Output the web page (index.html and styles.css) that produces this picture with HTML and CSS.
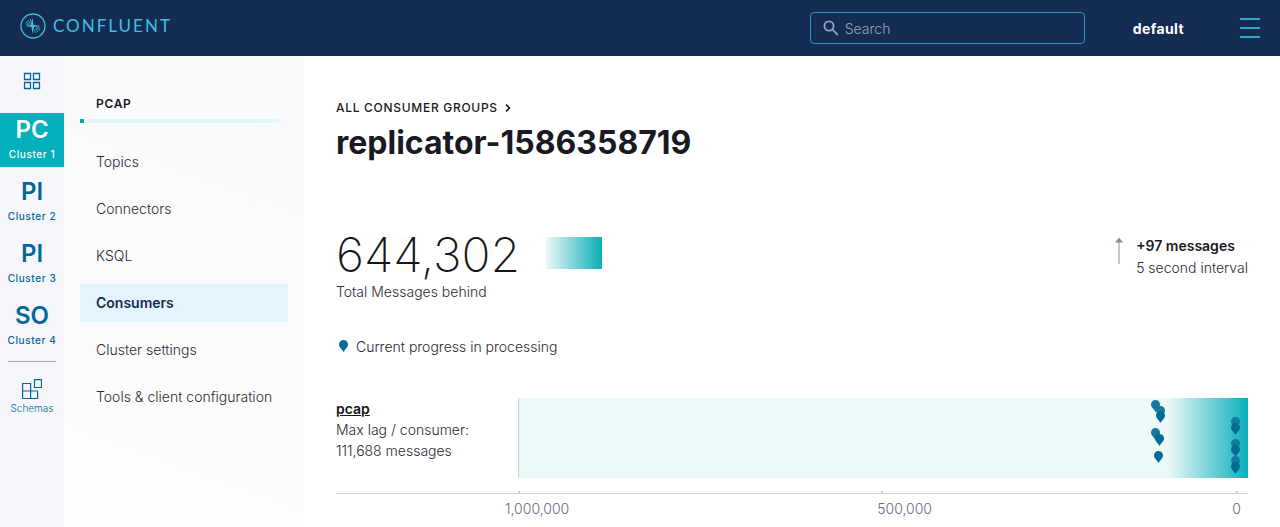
FILE: index.html
```html
<!DOCTYPE html>
<html lang="en">
<head>
<meta charset="utf-8">
<meta name="viewport" content="width=device-width, initial-scale=1">
<title>replicator-1586358719 – Consumer groups</title>
<link rel="stylesheet" href="styles.css">
</head>
<body>
<svg class="defs" width="0" height="0" aria-hidden="true">
  <symbol id="pin" viewBox="0 0 9 12"><path d="M4.500 0a4.500 4.500 0 0 1 4.500 4.500C9 7.200 6.500 8.600 4.500 12 2.500 8.600 0 7.200 0 4.500A4.500 4.500 0 0 1 4.500 0z"/></symbol>
</svg>
<header class="topbar">
  <a class="brand" href="#" aria-label="Confluent">
    <svg class="brand-mark" viewBox="0 0 26 26" fill="none" stroke="currentColor">
      <circle cx="13" cy="13" r="12" stroke-width="1.300"/>
      <path d="M12.500 5l1 7 7.500 1-7 1-1.500 7-1-7-7-1 6-.8z" fill="currentColor" stroke="none"/>
      <path d="M11.300 9.500L10.300 6M10.300 10.300L7.800 7M9.600 11L6 8.800M9.300 12L5.500 10.700M14.500 16.500l1 3.500M15.500 15.700l2.500 3.300M16.200 15l3.600 2.200M16.500 14l3.800 1.300" stroke-width=".8"/>
    </svg>
    <span class="brand-name">CONFLUENT</span>
  </a>
  <label class="search">
    <svg class="search-icon" viewBox="0 0 16 16" fill="none" stroke="currentColor" stroke-width="1.800"><circle cx="6" cy="6" r="4.600"/><path d="M9.300 9.300l5.500 5.500"/></svg>
    <input class="search-input" type="search" placeholder="Search" aria-label="Search">
  </label>
  <button class="tenant" type="button">default</button>
  <button class="menu" type="button" aria-label="Menu">
    <span class="menu-bar"></span><span class="menu-bar"></span><span class="menu-bar"></span>
  </button>
</header>
<div class="shell">
  <nav class="rail" aria-label="Clusters">
    <a class="rail-home" href="#" aria-label="Home">
      <svg class="home-icon" viewBox="0 0 18 18" fill="none" stroke="currentColor" stroke-width="1.300"><path d="M1.500 1.500h6v6h-6zM10.500 1.500h6v6h-6zM1.500 10.500h6v6h-6zM10.500 10.500h6v6h-6z"/></svg>
    </a>
    <a class="cluster cluster-active" href="#"><span class="cluster-code">PC</span><span class="cluster-name">Cluster 1</span></a>
    <a class="cluster" href="#"><span class="cluster-code">PI</span><span class="cluster-name">Cluster 2</span></a>
    <a class="cluster" href="#"><span class="cluster-code">PI</span><span class="cluster-name">Cluster 3</span></a>
    <a class="cluster" href="#"><span class="cluster-code">SO</span><span class="cluster-name">Cluster 4</span></a>
    <a class="schemas" href="#">
      <svg class="schemas-icon" viewBox="0 0 20 20" fill="none" stroke="currentColor" stroke-width="1.200"><path d="M.600 4.500h8v15h-8zM.600 12h15v7.500h-15M12.500.600h7v7.900h-7z"/></svg>
      <span>Schemas</span>
    </a>
  </nav>
  <nav class="sidebar" aria-label="Cluster sections">
    <h2 class="sidebar-title">PCAP</h2>
    <div class="rule"><span class="rule-dot"></span><span class="rule-line"></span></div>
    <a class="nav-link" href="#">Topics</a>
    <a class="nav-link" href="#">Connectors</a>
    <a class="nav-link" href="#">KSQL</a>
    <a class="nav-link nav-active" href="#" aria-current="page">Consumers</a>
    <a class="nav-link" href="#">Cluster settings</a>
    <a class="nav-link" href="#">Tools &amp; client configuration</a>
  </nav>
  <main class="main">
    <a class="crumb" href="#">ALL CONSUMER GROUPS
      <svg class="crumb-icon" viewBox="0 0 6 8" fill="none" stroke="currentColor" stroke-width="1.600"><path d="M1 .700L4.500 4 1 7.300"/></svg>
    </a>
    <h1 class="title">replicator-1586358719</h1>
    <section class="summary">
      <div>
        <div class="total-row"><span class="total">644,302</span><span class="swatch"></span></div>
        <div class="total-label">Total Messages behind</div>
      </div>
      <div class="trend">
        <svg class="trend-icon" viewBox="0 0 8 28"><path d="M4 2v25" stroke="currentColor" fill="none"/><path d="M4 .500L8 5.500H0z" fill="currentColor"/></svg>
        <div><div class="trend-value">+97 messages</div><div>5 second interval</div></div>
      </div>
    </section>
    <div class="legend"><svg class="legend-pin"><use href="#pin"/></svg>Current progress in processing</div>
    <section class="lag">
      <div class="lag-text">
        <a class="topic" href="#">pcap</a>
        <div>Max lag / consumer:</div>
        <div>111,688 messages</div>
      </div>
      <div class="chart">
        <svg class="pin pin-back" style="left:87.400%;top:3%"><use href="#pin"/></svg>
        <svg class="pin pin-back" style="left:88%;top:10%"><use href="#pin"/></svg>
        <svg class="pin" style="left:88%;top:16%"><use href="#pin"/></svg>
        <svg class="pin pin-back" style="left:87.400%;top:38%"><use href="#pin"/></svg>
        <svg class="pin" style="left:87.900%;top:45%"><use href="#pin"/></svg>
        <svg class="pin" style="left:87.800%;top:66%"><use href="#pin"/></svg>
        <svg class="pin pin-back" style="left:98.300%;top:24%"><use href="#pin"/></svg>
        <svg class="pin" style="left:98.300%;top:31%"><use href="#pin"/></svg>
        <svg class="pin pin-back" style="left:98.300%;top:51%"><use href="#pin"/></svg>
        <svg class="pin" style="left:98.300%;top:59%"><use href="#pin"/></svg>
        <svg class="pin pin-back" style="left:98.300%;top:72%"><use href="#pin"/></svg>
        <svg class="pin" style="left:98.300%;top:80%"><use href="#pin"/></svg>
      </div>
    </section>
    <div class="axis">
      <div class="ticks"><span class="tick"></span><span class="tick"></span><span class="tick"></span></div>
      <div class="labels"><span>1,000,000</span><span>500,000</span><span>0</span></div>
    </div>
  </main>
</div>
</body>
</html>
```
FILE: styles.css
```css
* { box-sizing: border-box; }
body {
  margin: 0;
  min-height: 100vh;
  display: flex;
  flex-direction: column;
  font: 300 14px/22px Inter, "Liberation Sans", sans-serif;
  font-optical-sizing: none;
  color: #2b2b33;
  background: #fff;
}
a { color: inherit; text-decoration: none; }
button { font: inherit; border: 0; background: none; padding: 0; cursor: pointer; }
svg { display: block; flex: none; }
.defs { position: absolute; }

.topbar {
  display: flex;
  align-items: center;
  height: 56px;
  padding: 0 20px;
  background: #152c52;
}
.brand { display: flex; align-items: center; gap: 7px; margin: 0 auto 5px 0; color: #3fbfe0; }
.brand-mark { width: 26px; height: 26px; }
.brand-name { font-family: Lato, Inter, sans-serif; font-size: 17px; line-height: 26px; font-weight: 400; letter-spacing: 2px; }
.search {
  display: flex;
  align-items: center;
  gap: 6px;
  width: 275px;
  height: 32px;
  padding: 0 12px;
  border: 1px solid #3096b8;
  border-radius: 4px;
  color: #93a6bd;
}
.search-icon { width: 16px; height: 16px; }
.search-input {
  flex: 1;
  min-width: 0;
  height: 22px;
  margin-top: 2px;
  padding: 0;
  border: 0;
  outline: 0;
  background: none;
  color: #fff;
  font: inherit;
}
.search-input::placeholder { color: #93a6bd; opacity: 1; }
.tenant { margin: 2px 56px 0 48px; color: #fff; font-weight: 700; letter-spacing: .4px; }
.menu { display: flex; flex-direction: column; gap: 7px; width: 20px; }
.menu-bar { width: 20px; height: 2px; background: #30a6c9; }

.shell { flex: 1; display: flex; }
.rail {
  flex: none;
  width: 64px;
  background: #f7f7fb;
  color: #00699a;
  text-align: center;
}
.rail-home { display: flex; justify-content: center; padding: 16px 0 23px; }
.home-icon { width: 18px; height: 18px; }
.cluster { display: flex; flex-direction: column; height: 54px; margin-bottom: 8px; padding-top: 2px; }
.cluster-active { background: #03b0bb; color: #fff; }
.cluster-code { font-size: 24px; line-height: 30px; font-weight: 600; }
.cluster-name { font-size: 10px; line-height: 18px; font-weight: 500; letter-spacing: .6px; }
.schemas {
  display: flex;
  flex-direction: column;
  align-items: center;
  margin: 0 8px;
  padding-top: 17px;
  border-top: 1px solid #a9a6bd;
  font-size: 10px;
  line-height: 18px;
}
.schemas-icon { width: 20px; height: 20px; }

.sidebar {
  flex: none;
  width: 240px;
  padding: 38px 16px;
  background: linear-gradient(20deg, #fdfdfd, #f9f9fb);
}
.sidebar-title { margin: 0 0 5px 16px; color: #16161e; font-size: 12px; line-height: 20px; font-weight: 600; letter-spacing: .7px; }
.rule { display: flex; gap: 4px; height: 4px; margin: 0 8px 20px 0; }
.rule-dot { width: 4px; background: #03a5b0; }
.rule-line { flex: 1; background: #e3f4fc; }
.nav-link { display: block; margin-bottom: 9px; padding: 8px 16px; white-space: nowrap; }
.nav-active { background: #e5f4fc; color: #152c52; font-weight: 600; }

.main { flex: 1; min-width: 0; padding: 40px 32px 0; }
.crumb { display: inline-flex; align-items: center; gap: 7px; font-size: 12px; line-height: 20px; font-weight: 500; letter-spacing: .7px; color: #191924; }
.crumb-icon { width: 6px; height: 8px; }
.title { margin: 5px 0 66px; color: #191924; font-size: 32px; line-height: 40px; font-weight: 700; }
.summary { display: flex; justify-content: space-between; }
.total-row { display: flex; align-items: flex-start; gap: 26px; }
.total { font-size: 48px; line-height: 52px; font-weight: 200; color: #16161a; }
.swatch { width: 56px; height: 32px; margin-top: 8px; background: linear-gradient(90deg, #edf9f9, #09afba); }
.trend { display: flex; gap: 13px; padding-top: 6px; }
.trend-icon { width: 8px; height: 28px; margin-top: 2px; color: #8b879e; }
.trend-value { font-weight: 600; color: #191924; }
.legend { display: flex; align-items: center; gap: 8px; margin: 33px 0 40px; padding-left: 3px; }
.legend-pin { width: 9px; height: 12px; margin-bottom: 2px; fill: #006c98; }
.lag { display: grid; grid-template-columns: 182px 1fr; }
.lag-text { line-height: 21px; }
.topic { font-weight: 600; color: #16161a; text-decoration: underline; }
.chart {
  position: relative;
  height: 80px;
  border-left: 1px solid #ccd0d0;
  background: linear-gradient(90deg, #edf9f9 89%, #09afba);
}
.pin { position: absolute; width: 9px; height: 12px; margin-left: -5px; fill: #006c98; }
.pin-back { fill: #147aa0; }
.axis { margin-top: 13px; }
.ticks { display: grid; grid-template-columns: 363fr 355fr 2px; padding: 0 10px 0 182px; border-bottom: 1px solid #d2d2d2; }
.tick { width: 2px; height: 2px; background: #d2d2d2; }
.labels { display: grid; grid-template-columns: 372fr 355fr auto; margin-top: 4px; padding: 0 7px 0 169px; color: #69657f; }
```
